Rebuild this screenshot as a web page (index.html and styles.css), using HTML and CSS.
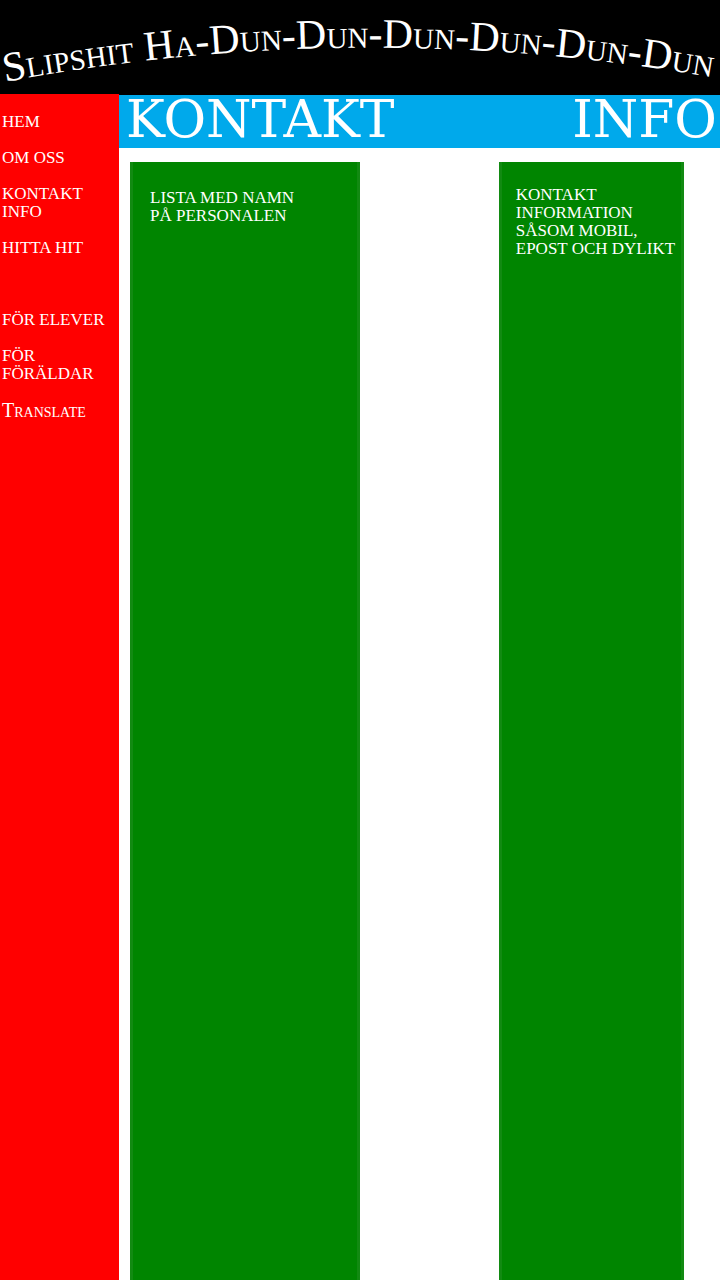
FILE: index.html
```html
<!DOCTYPE html>
<html lang="sv">
<head>
<meta charset="utf-8">
<meta name="viewport" content="width=device-width, initial-scale=1">
<title>Kontakt info</title>
<link rel="stylesheet" href="styles.css">
</head>
<body>
<header class="banner">
  <svg class="banner-art" viewBox="0 0 720 94">
    <path id="arc" d="M5 82 Q362 15 722 79" fill="none"/>
    <text class="banner-text"><textPath href="#arc">Slipshit Ha-Dun-Dun-Dun-Dun-Dun-Dun</textPath></text>
  </svg>
</header>
<div class="page">
  <nav class="sidebar">
    <ul class="menu">
      <li><a href="#hem">HEM</a></li>
      <li><a href="#om">OM OSS</a></li>
      <li><a href="#kontakt">KONTAKT INFO</a></li>
      <li><a href="#hitta">HITTA HIT</a></li>
    </ul>
    <ul class="menu">
      <li><a href="#elever">FÖR ELEVER</a></li>
      <li><a href="#foraldrar">FÖR FÖRÄLDAR</a></li>
      <li><a class="translate" href="#translate">Translate</a></li>
    </ul>
  </nav>
  <main class="content">
    <h1 class="heading"><span>KONTAKT</span> <span>INFO</span></h1>
    <div class="columns">
      <section class="panel staff"><p>LISTA MED NAMN<br>PÅ PERSONALEN</p></section>
      <section class="panel details"><p>KONTAKT<br>INFORMATION<br>SÅSOM MOBIL,<br>EPOST OCH DYLIKT</p></section>
    </div>
  </main>
</div>
</body>
</html>
```

FILE: styles.css
```css
* {
  box-sizing: border-box;
}

body {
  margin: 0;
  min-height: 100vh;
  display: flex;
  flex-direction: column;
  background: #fff;
  color: #fff;
  font: 17px/18px "Liberation Serif", "Times New Roman", serif;
}

.banner {
  background: #000;
}

.banner-art {
  display: block;
  width: 100%;
}

.banner-text {
  fill: #fff;
  font-size: 42px;
  font-variant: small-caps;
}

.page {
  flex: 1;
  display: flex;
}

.sidebar {
  flex: 0 0 119px;
  display: flex;
  flex-direction: column;
  gap: 54px;
  padding: 19px 8px 18px 2px;
  background: #f00;
}

.menu {
  display: flex;
  flex-direction: column;
  gap: 18px;
  margin: 0;
  padding: 0;
  list-style: none;
}

.menu a {
  display: block;
  color: #fff;
  text-decoration: none;
}

.menu .translate {
  font-size: 20px;
  font-variant: small-caps;
}

.content {
  flex: 1;
  display: flex;
  flex-direction: column;
  border-top: 1px solid #000;
}

.heading {
  display: flex;
  justify-content: space-between;
  margin: 0;
  padding: 0 3px 5px 7px;
  background: #00a9eb;
  font: 52px/48px "DejaVu Serif", serif;
}

.columns {
  flex: 1;
  display: grid;
  grid-template-columns: 230fr 185fr;
  column-gap: 25%;
  padding: 14px 36px 0 11px;
}

.panel {
  border: solid #128a12;
  border-width: 0 3px;
  background: #008500;
}

.panel p {
  margin: 0;
  white-space: nowrap;
}

.staff {
  padding: 27px 0 0 17px;
}

.details {
  padding: 24px 0 0 14px;
}
```
